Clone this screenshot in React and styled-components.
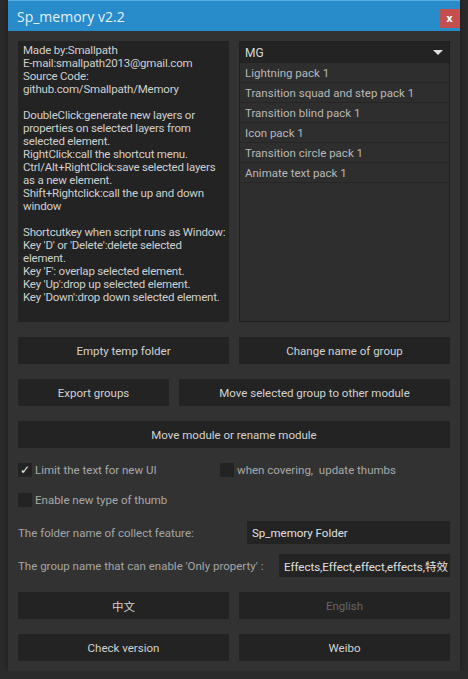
import React from 'react'
import styled, { createGlobalStyle } from 'styled-components'

const Global = createGlobalStyle`
  body {
    margin: 0;
    background: #2b2b2b;
    font-family: Roboto, "Noto Sans CJK SC", sans-serif;
    font-size: 11px;
  }
`

const Window = styled.div`
  margin-left: 8px;
  width: 452px;
  height: 671px;
  background: #323232;
  display: flex;
  flex-direction: column;
  box-shadow: 0 0 6px rgba(0, 0, 0, 0.35);
`

const TitleBar = styled.div`
  height: 31px;
  background: #288bca;
  border-top: 1px solid #5aaee0;
  box-sizing: border-box;
  display: flex;
  align-items: center;
  justify-content: space-between;
  padding: 0 1px 0 9px;
  & h1 {
    margin: 0;
    font-family: "Open Sans", sans-serif;
    font-size: 14px;
    font-weight: normal;
    color: #e6f1f9;
  }
`

const Close = styled.div`
  width: 19px;
  height: 19px;
  background: #c44f4f;
  color: #fff;
  font-size: 10px;
  font-weight: bold;
  display: flex;
  align-items: center;
  justify-content: center;
  margin-top: 4px;
  font-family: "DejaVu Sans", sans-serif;
`

const Body = styled.div`
  padding: 10px 10px 0;
  display: flex;
  flex-direction: column;
`

const Top = styled.div`
  display: grid;
  grid-template-columns: 211px 211px;
  gap: 10px;
  height: 281px;
`

const Info = styled.div`
  background: #232323;
  color: #cfcfcf;
  padding: 3px 2px 0 5px;
  line-height: 13px;
  white-space: pre-wrap;
  font-size: 11.5px;
  letter-spacing: -0.2px;
`

const List = styled.div`
  background: #2e2e2e;
  border: 1px solid #1f1f1f;
  display: flex;
  flex-direction: column;
`

const ListHead = styled.div`
  height: 21px;
  background: #232323;
  color: #d6d6d6;
  display: flex;
  align-items: center;
  justify-content: space-between;
  padding: 0 6px 0 5px;
  font-size: 12px;
  &::after {
    content: '';
    border-left: 5px solid transparent;
    border-right: 5px solid transparent;
    border-top: 5px solid #e0e0e0;
  }
`

const Item = styled.div`
  height: 19px;
  border-bottom: 1px solid #262626;
  color: #b8b8b8;
  padding-left: 5px;
  display: flex;
  align-items: center;
  font-size: 11.5px;
`

const Row = styled.div`
  display: grid;
  grid-template-columns: ${p => p.cols || '1fr 1fr'};
  gap: 10px;
  margin-top: ${p => p.gap || 15}px;
`

const Button = styled.div`
  height: 27px;
  background: #232323;
  color: ${p => (p.disabled ? '#666' : '#d2d2d2')};
  display: flex;
  align-items: center;
  justify-content: center;
  font-size: 11.5px;
`

const Checks = styled.div`
  display: grid;
  grid-template-columns: 202px 1fr;
  row-gap: 15px;
  margin-top: 14px;
`

const Check = styled.label`
  display: flex;
  align-items: center;
  gap: 3px;
  color: #a9a9a9;
  font-size: 11.5px;
  height: 15px;
`

const Box = styled.span`
  width: 14px;
  height: 14px;
  background: #232323;
  color: #f0f0f0;
  font-size: 12px;
  line-height: 14px;
  text-align: center;
  font-family: "DejaVu Sans", sans-serif;
`

const Field = styled.div`
  display: flex;
  align-items: center;
  justify-content: space-between;
  margin-top: ${p => p.gap}px;
  color: #a5a5a5;
  font-size: 11.5px;
`

const Input = styled.div`
  width: ${p => p.w}px;
  height: 23px;
  background: #232323;
  color: #e0e0e0;
  display: flex;
  align-items: center;
  padding-left: 5px;
  box-sizing: border-box;
  overflow: hidden;
  white-space: nowrap;
  font-size: 11.5px;
`

const info = `Made by:Smallpath
E-mail:smallpath2013@gmail.com
Source Code:
github.com/Smallpath/Memory

DoubleClick:generate new layers or properties on selected layers from selected element.
RightClick:call the shortcut menu.
Ctrl/Alt+RightClick:save selected layers as a new element.
Shift+Rightclick:call the up and down window

Shortcutkey when script runs as Window:
Key 'D' or 'Delete':delete selected element.
Key 'F': overlap selected element.
Key 'Up':drop up selected element.
Key 'Down':drop down selected element.`

const packs = [
  'Lightning pack 1',
  'Transition squad and step pack 1',
  'Transition blind pack 1',
  'Icon pack 1',
  'Transition circle pack 1',
  'Animate text pack 1'
]

export default function App() {
  return (
    <>
      <Global />
      <Window>
        <TitleBar>
          <h1>Sp_memory v2.2</h1>
          <Close>x</Close>
        </TitleBar>
        <Body>
          <Top>
            <Info>{info}</Info>
            <List>
              <ListHead>MG</ListHead>
              {packs.map(p => (
                <Item key={p}>{p}</Item>
              ))}
            </List>
          </Top>
          <Row>
            <Button>Empty temp folder</Button>
            <Button>Change name of group</Button>
          </Row>
          <Row cols="151px 1fr">
            <Button>Export groups</Button>
            <Button>Move selected group to other module</Button>
          </Row>
          <Row cols="1fr">
            <Button>Move module or rename module</Button>
          </Row>
          <Checks>
            <Check>
              <Box>✓</Box>Limit the text for new UI
            </Check>
            <Check>
              <Box />when covering,&nbsp; update thumbs
            </Check>
            <Check>
              <Box />Enable new type of thumb
            </Check>
          </Checks>
          <Field gap={14}>
            The folder name of collect feature:
            <Input w={203}>Sp_memory Folder</Input>
          </Field>
          <Field gap={10}>
            The group name that can enable 'Only property' :
            <Input w={171}>Effects,Effect,effect,effects,特效</Input>
          </Field>
          <Row gap={15}>
            <Button>中文</Button>
            <Button disabled>English</Button>
          </Row>
          <Row>
            <Button>Check version</Button>
            <Button>Weibo</Button>
          </Row>
        </Body>
      </Window>
    </>
  )
}
